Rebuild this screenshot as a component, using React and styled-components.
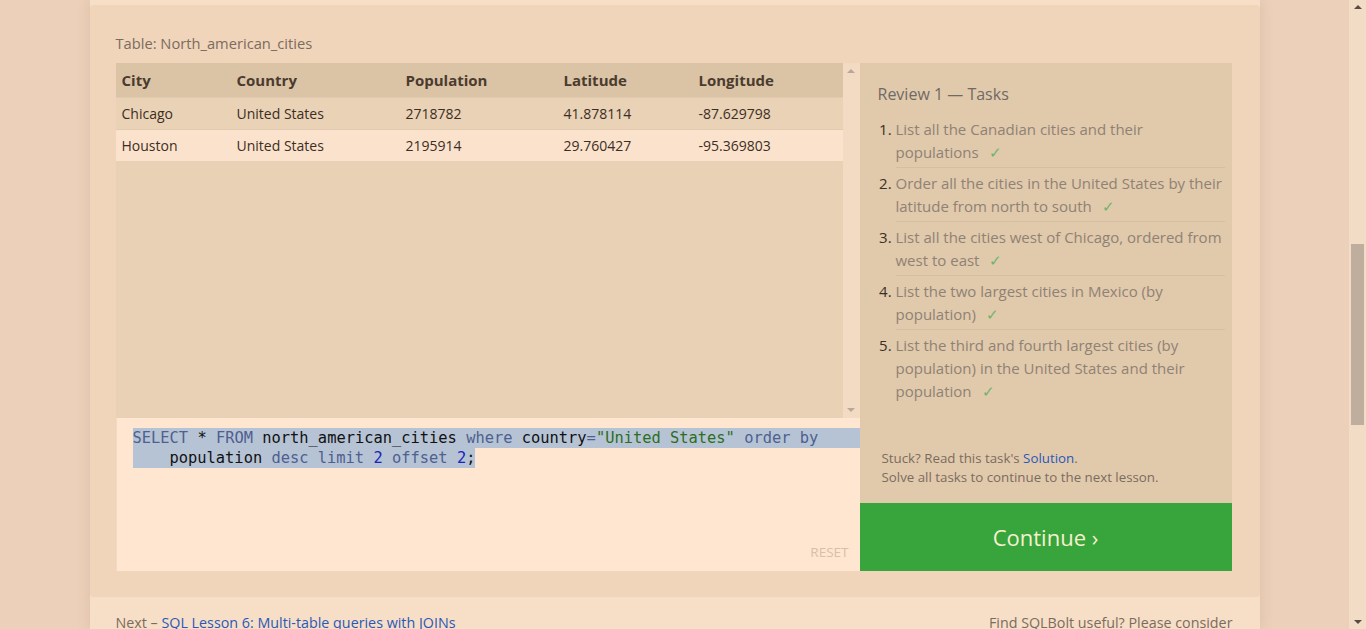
import React from "react";
import styled, { createGlobalStyle } from "styled-components";

const Global = createGlobalStyle`
  html, body { margin: 0; padding: 0; height: 100%; overflow: hidden; }
  body { background: #ecd0b9; font-family: "Open Sans", "Liberation Sans", sans-serif; }
`;

const Viewport = styled.div`
  display: flex;
  width: 1366px;
  height: 629px;
  overflow: hidden;
`;

const Main = styled.div`
  flex: 1;
  display: flex;
  justify-content: center;
  background: #ecd0b9;
`;

const Column = styled.div`
  width: 1170px;
  background: #f7dec6;
  box-shadow: 0 0 12px rgba(150, 110, 80, 0.18);
  padding-top: 5px;
  display: flex;
  flex-direction: column;
`;

const Card = styled.div`
  background: #f0d5ba;
  border-radius: 4px;
  padding: 26px 28px 26px 26px;
  display: flex;
  flex-direction: column;
`;

const TableLabel = styled.div`
  font-size: 14.7px;
  color: #7b6c60;
  line-height: 20px;
  margin: 2px 0 10px;
`;

const Workspace = styled.div`
  display: grid;
  grid-template-columns: 744px 372px;
  grid-template-rows: 355px 153px;
`;

const TablePane = styled.div`
  display: flex;
  background: #e9d1b5;
`;

const TableArea = styled.div`
  flex: 1;
`;

const Table = styled.table`
  width: 100%;
  border-collapse: collapse;
  table-layout: fixed;
`;

const Th = styled.th`
  text-align: left;
  font-weight: 700;
  font-size: 15px;
  color: #4a3b2e;
  background: #dbc3a6;
  height: 34px;
  padding: 0 6px;
  box-sizing: border-box;
`;

const Td = styled.td`
  font-size: 14px;
  color: #3b2e24;
  height: 32px;
  padding: 0 6px;
  box-sizing: border-box;
  background: ${(p) => (p.$alt ? "#fbe2cc" : "#ead2b6")};
  border-top: 1px solid #e2cab0;
`;

const ScrollTrack = styled.div`
  width: 17px;
  background: #f3dbc3;
  display: flex;
  flex-direction: column;
  justify-content: space-between;
  align-items: center;
  padding: 6px 0;
  box-sizing: border-box;
`;

const Arrow = styled.div`
  width: 0;
  height: 0;
  border-left: ${(p) => p.$size}px solid transparent;
  border-right: ${(p) => p.$size}px solid transparent;
  ${(p) =>
    p.$down
      ? `border-top: ${p.$size}px solid ${p.$color};`
      : `border-bottom: ${p.$size}px solid ${p.$color};`}
`;

const TaskPane = styled.div`
  grid-row: 1 / 3;
  grid-column: 2;
  display: flex;
  flex-direction: column;
`;

const TaskBody = styled.div`
  flex: 1;
  background: #e1c9ac;
  padding: 20px 7px 16px 18px;
  display: flex;
  flex-direction: column;
`;

const TaskTitle = styled.div`
  font-size: 16px;
  color: #6f6a66;
  line-height: 22px;
  margin-bottom: 9px;
`;

const TaskList = styled.ol`
  margin: 0;
  padding: 0 0 0 18px;
  flex: 1;
`;

const TaskItem = styled.li`
  font-size: 15px;
  line-height: 23px;
  color: #8f8274;
  padding: 4px 0 3px;
  border-bottom: ${(p) => (p.$last ? "none" : "1px solid #d6bea3")};
  &::marker { color: #3a3024; }
`;

const Check = styled.span`
  color: #6db46a;
  margin-left: 10px;
`;

const Stuck = styled.div`
  font-size: 13.3px;
  line-height: 19px;
  color: #7b6c60;
  padding-left: 4px;
`;

const Link = styled.a`
  color: #2a58b8;
  text-decoration: none;
`;

const ContinueButton = styled.div`
  height: 68px;
  background: #38a43c;
  color: #f5f1cf;
  font-size: 22px;
  display: flex;
  align-items: center;
  justify-content: center;
`;

const Editor = styled.div`
  background: #fee6d1;
  border-left: 1px solid #f3d9c2;
  padding: 10px 0 0 16px;
  display: flex;
  flex-direction: column;
  font-family: "DejaVu Sans Mono", "Liberation Mono", monospace;
  font-size: 15.4px;
`;

const CodeLine = styled.div`
  line-height: 20px;
  white-space: pre;
  color: #111;
  background: #b5c3d5;
  align-self: ${(p) => (p.$full ? "stretch" : "flex-start")};
  padding-left: ${(p) => (p.$indent ? "37px" : "0")};
`;

const Kw = styled.span` color: #4f5f8f; `;
const Str = styled.span` color: #2d6e20; `;
const Num = styled.span` color: #1a22b8; `;

const Reset = styled.div`
  margin-top: auto;
  align-self: flex-end;
  font-family: "Open Sans", "Liberation Sans", sans-serif;
  font-size: 13.5px;
  color: #d6c0a9;
  padding: 0 11px 10px 0;
`;

const Footer = styled.div`
  display: flex;
  justify-content: space-between;
  padding: 16px 27px 0 26px;
  font-size: 14.3px;
  color: #7b6c60;
`;

const PageScroll = styled.div`
  width: 17px;
  background: #f3dcc6;
  display: flex;
  flex-direction: column;
  align-items: center;
  padding: 5px 0;
  box-sizing: border-box;
`;

const Thumb = styled.div`
  width: 13px;
  height: 181px;
  background: #bfad9d;
  margin-top: 235px;
  margin-bottom: auto;
`;

const rows = [
  ["Chicago", "United States", "2718782", "41.878114", "-87.629798"],
  ["Houston", "United States", "2195914", "29.760427", "-95.369803"],
];

const tasks = [
  "List all the Canadian cities and their populations",
  "Order all the cities in the United States by their latitude from north to south",
  "List all the cities west of Chicago, ordered from west to east",
  "List the two largest cities in Mexico (by population)",
  "List the third and fourth largest cities (by population) in the United States and their population",
];

export default function App() {
  return (
    <>
      <Global />
      <Viewport>
        <Main>
          <Column>
            <Card>
              <TableLabel>Table: North_american_cities</TableLabel>
              <Workspace>
                <TablePane>
                  <TableArea>
                    <Table>
                      <colgroup>
                        <col style={{ width: 115 }} />
                        <col style={{ width: 169 }} />
                        <col style={{ width: 158 }} />
                        <col style={{ width: 135 }} />
                        <col style={{ width: 150 }} />
                      </colgroup>
                      <thead>
                        <tr>
                          <Th>City</Th>
                          <Th>Country</Th>
                          <Th>Population</Th>
                          <Th>Latitude</Th>
                          <Th>Longitude</Th>
                        </tr>
                      </thead>
                      <tbody>
                        {rows.map((r, i) => (
                          <tr key={i}>
                            {r.map((c, j) => (
                              <Td key={j} $alt={i % 2 === 1}>{c}</Td>
                            ))}
                          </tr>
                        ))}
                      </tbody>
                    </Table>
                  </TableArea>
                  <ScrollTrack>
                    <Arrow $size={4} $color="#b9a898" />
                    <Arrow $size={4} $color="#b9a898" $down />
                  </ScrollTrack>
                </TablePane>
                <TaskPane>
                  <TaskBody>
                    <TaskTitle>Review 1 — Tasks</TaskTitle>
                    <TaskList>
                      {tasks.map((t, i) => (
                        <TaskItem key={i} $last={i === tasks.length - 1}>
                          {t}
                          <Check>✓</Check>
                        </TaskItem>
                      ))}
                    </TaskList>
                    <Stuck>
                      Stuck? Read this task's <Link>Solution</Link>.
                      <br />
                      Solve all tasks to continue to the next lesson.
                    </Stuck>
                  </TaskBody>
                  <ContinueButton>Continue ›</ContinueButton>
                </TaskPane>
                <Editor>
                  <CodeLine $full>
                    <Kw>SELECT</Kw> * <Kw>FROM</Kw> north_american_cities <Kw>where</Kw> country<Kw>=</Kw>
                    <Str>"United States"</Str> <Kw>order by</Kw>
                  </CodeLine>
                  <CodeLine $indent>
                    population <Kw>desc</Kw> <Kw>limit</Kw> <Num>2</Num> <Kw>offset</Kw> <Num>2</Num>;
                  </CodeLine>
                  <Reset>RESET</Reset>
                </Editor>
              </Workspace>
            </Card>
            <Footer>
              <span>
                Next – <Link>SQL Lesson 6: Multi-table queries with JOINs</Link>
              </span>
              <span>Find SQLBolt useful? Please consider</span>
            </Footer>
          </Column>
        </Main>
        <PageScroll>
          <Arrow $size={4} $color="#5a4a40" />
          <Thumb />
          <Arrow $size={4} $color="#5a4a40" $down />
        </PageScroll>
      </Viewport>
    </>
  );
}
